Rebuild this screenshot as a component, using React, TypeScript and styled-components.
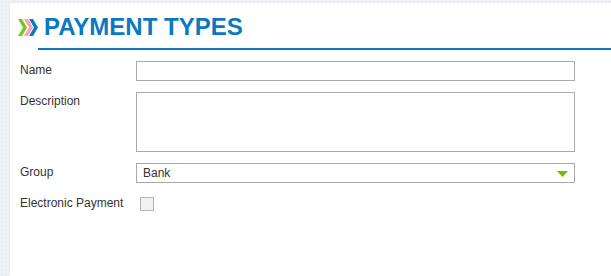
import React from 'react'
import styled, { createGlobalStyle } from 'styled-components'

const GlobalStyle = createGlobalStyle`
  html, body {
    margin: 0;
    padding: 0;
  }
  body {
    font-family: 'Liberation Sans', Arial, sans-serif;
    font-size: 12px;
    color: #333;
  }
`

const Page = styled.div`
  display: flex;
  min-height: 100vh;
  box-sizing: border-box;
  padding: 3px 0 0 10px;
  background-color: #eef1f6;
  background-image: radial-gradient(#dfe4ec 0.6px, transparent 0.8px);
  background-size: 4px 4px;
`

const Panel = styled.div`
  flex: 1;
  background: #fff;
  padding-top: 10px;
`

const Header = styled.div`
  display: flex;
  align-items: center;
  padding-left: 8px;
`

const Chevrons = styled.svg`
  width: 20px;
  height: 17px;
  flex: none;
`

const Title = styled.h1`
  margin: 0 0 0 6px;
  font-size: 24px;
  line-height: 28px;
  font-weight: bold;
  color: #0a78c2;
`

const Rule = styled.div`
  height: 2px;
  margin: 7px 0 0 28px;
  background: #0a78c2;
`

const Form = styled.div`
  display: flex;
  flex-direction: column;
  gap: 11px;
  padding: 11px 0 0 10px;
`

const Row = styled.div`
  display: flex;
  align-items: flex-start;
`

const Label = styled.label`
  width: 116px;
  flex: none;
  padding-top: 2px;
  line-height: 14px;
  color: #333;
`

const TextInput = styled.input`
  box-sizing: border-box;
  width: 439px;
  height: 20px;
  margin: 0;
  border: 1px solid #aaa;
  padding: 0 6px;
  font: inherit;
  outline: none;
`

const TextArea = styled.textarea`
  box-sizing: border-box;
  width: 439px;
  height: 60px;
  margin: 0;
  border: 1px solid #aaa;
  padding: 3px 6px;
  font: inherit;
  resize: none;
  outline: none;
`

const Select = styled.div`
  box-sizing: border-box;
  width: 439px;
  height: 20px;
  display: flex;
  align-items: center;
  justify-content: space-between;
  border: 1px solid #aaa;
  padding: 0 6px 0 6px;
  line-height: 18px;
  color: #333;
`

const Arrow = styled.svg`
  width: 11px;
  height: 6px;
  margin-top: 1px;
`

const CheckBox = styled.span<{ checked?: boolean }>`
  box-sizing: border-box;
  display: block;
  width: 14px;
  height: 14px;
  margin: 3px 0 0 4px;
  border: 1px solid #b5b5b5;
  background: ${p => (p.checked ? '#0a78c2' : '#f2f2f2')};
`

const App = () => {
  return (
    <>
      <GlobalStyle />
      <Page>
        <Panel>
          <Header>
            <Chevrons viewBox="0 0 20 17">
              <path d="M0 0h4l5 8.5L4 17H0l5-8.5z" fill="#7cc51f" />
              <path d="M6 0h4l5 8.5L10 17H6l5-8.5z" fill="#f5a3b4" />
              <path d="M11 0h4l5 8.5L15 17h-4l5-8.5z" fill="#0a78c2" />
            </Chevrons>
            <Title>PAYMENT TYPES</Title>
          </Header>
          <Rule />
          <Form>
            <Row>
              <Label>Name</Label>
              <TextInput type="text" />
            </Row>
            <Row>
              <Label>Description</Label>
              <TextArea />
            </Row>
            <Row>
              <Label>Group</Label>
              <Select>
                <span>Bank</span>
                <Arrow viewBox="0 0 11 6">
                  <path d="M0 0h11L5.5 6z" fill="#6cbf10" />
                </Arrow>
              </Select>
            </Row>
            <Row>
              <Label>Electronic Payment</Label>
              <CheckBox />
            </Row>
          </Form>
        </Panel>
      </Page>
    </>
  )
}

export default App
